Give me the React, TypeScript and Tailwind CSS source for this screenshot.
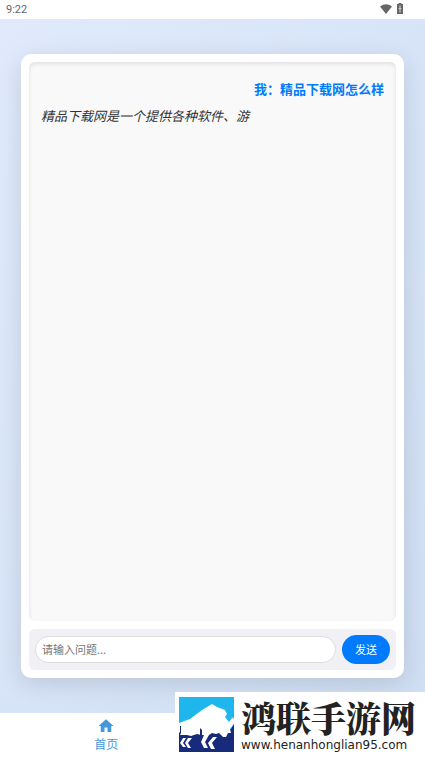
import * as React from "react"

interface MessageProps {
  from: "user" | "assistant"
  children: React.ReactNode
}

const StatusBar: React.FC = () => {
  return (
    <header className="flex h-[19px] items-center justify-between bg-white pr-[21px] pl-1.5 font-[Roboto,sans-serif] text-[11px] leading-[19px] text-[#666]">
      <span>9:22</span>
      <div className="flex items-center gap-1 pb-0.5">
        <svg viewBox="0 0 12 10" className="h-[10px] w-3" fill="currentColor" aria-hidden="true">
          <path d="M0 2.5Q6-2.2 12 2.5L6 10Z" />
        </svg>
        <svg viewBox="0 0 8 11" className="h-[11px] w-2" fill="currentColor" aria-hidden="true">
          <path d="M2.5 0h3v1H7v10H1V1h1.5Z" />
          <path d="M3.5 2.5h1V5H6L4.5 6v3.5h-1V6L2 5h1.5Z" fill="#ddd" />
        </svg>
      </div>
    </header>
  )
}

const Message: React.FC<MessageProps> = ({ from, children }) => {
  if (from === "user") {
    return <p className="text-right font-bold text-[#007bff]">{children}</p>
  }
  return <p className="text-[#333] italic">{children}</p>
}

const Composer: React.FC = () => {
  return (
    <form
      className="flex items-center gap-1.5 rounded-md bg-[#f0f0f5] p-1.5"
      onSubmit={(event) => event.preventDefault()}
    >
      <input
        type="text"
        aria-label="请输入问题"
        placeholder="请输入问题..."
        className="h-[27px] min-w-0 flex-1 rounded-full border border-[#ddd] bg-white px-1.5 pb-0.5 text-[11px] text-[#333] outline-none placeholder:text-[#757575]"
      />
      <button type="submit" className="h-[29px] rounded-full bg-[#007bff] px-[13px] pb-px text-[11px] text-white">
        发送
      </button>
    </form>
  )
}

const BisonLogo: React.FC = () => {
  return (
    <svg viewBox="0 0 55 55" className="size-[55px] shrink-0" aria-hidden="true">
      <path fill="#1fb6ee" d="M0 0h55v32H0Z" />
      <path fill="#172b7a" d="M0 32h55v23H0Z" />
      {/* back, head and beard */}
      <path
        fill="#fff"
        d="M0 26 11 22 23 13 33 7 38 10 46 13 49 17 55 22V27L51 32 52 36 49 36 47 40 44 40 40 36 37 37 33 36 30 38H22L18 37 12 39 8 38H0Z"
      />
      <path fill="#172b7a" d="M1 29h1v7l-2 4v-4l1-1ZM21 31l2 2v5h-2ZM52 32l3-5v14h-6l3-4Z" />
      <path fill="#1fb6ee" d="M46 13 49 12 52 17 53 21 50 25 46 20 48 17Z" />
      {/* legs */}
      <path
        fill="#fff"
        d="M4 41h3l-3 5 3 4H4l-3-4ZM9 41h4l-4 5 3 5H9l-3-5ZM25 38h5l-4 7 3 6h-4l-3-6ZM34 40h4l-5 6 3 6h-4l-3-6Z"
      />
    </svg>
  )
}

const SiteBadge: React.FC = () => {
  return (
    <a
      href="#site"
      className="absolute right-0 bottom-0 flex h-[65px] w-[250px] items-start gap-[7px] bg-white pt-[5px] pl-1 text-[#222]"
    >
      <BisonLogo />
      <span className="flex flex-col">
        <span className="font-['Noto_Serif_CJK_SC','Noto_Sans_CJK_SC',serif] text-[35px] leading-[40px] font-black">
          鸿联手游网
        </span>
        <span className="font-['DejaVu_Sans',sans-serif] text-[12px] leading-[16px]">www.henanhonglian95.com</span>
      </span>
    </a>
  )
}

const BottomNav: React.FC = () => {
  return (
    <nav className="relative grid h-11 grid-cols-2 bg-white">
      <a href="#home" className="flex flex-col items-center pt-1 text-[12px] leading-[18px] text-[#4698dc]">
        <svg viewBox="0 0 24 24" className="size-[18px]" fill="currentColor" aria-hidden="true">
          <path d="M10 20v-6h4v6h5v-8h3L12 3 2 12h3v8z" />
        </svg>
        首页
      </a>
      <SiteBadge />
    </nav>
  )
}

export default function App() {
  return (
    <div className="flex min-h-screen flex-col bg-white font-['Noto_Sans_CJK_SC',sans-serif]">
      <StatusBar />
      <main className="flex flex-1 flex-col bg-linear-to-br from-[#e0eafc] to-[#cfdef3] px-[21px] pt-[35px] pb-[35px]">
        <section className="flex flex-1 flex-col gap-2 rounded-[10px] bg-white p-2 shadow-[0_6px_24px_rgba(0,0,0,0.12)]">
          <div className="flex flex-1 flex-col gap-2 rounded-md bg-[#f9f9f9] px-3 pt-[17px] text-[13px] leading-[19px] shadow-[inset_0_2px_4px_rgba(0,0,0,0.1)]">
            <Message from="user">我：精品下载网怎么样</Message>
            <Message from="assistant">精品下载网是一个提供各种软件、游</Message>
          </div>
          <Composer />
        </section>
      </main>
      <BottomNav />
    </div>
  )
}
